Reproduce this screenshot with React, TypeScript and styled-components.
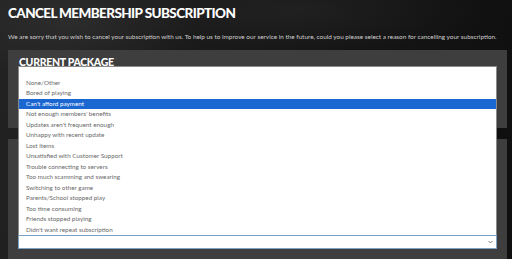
import styled, {createGlobalStyle} from "styled-components";

const reasons = [
    "",
    "None/Other",
    "Bored of playing",
    "Can't afford payment",
    "Not enough members' benefits",
    "Updates aren't frequent enough",
    "Unhappy with recent update",
    "Lost items",
    "Unsatisfied with Customer Support",
    "Trouble connecting to servers",
    "Too much scamming and swearing",
    "Switching to other game",
    "Parents/School stopped play",
    "Too time consuming",
    "Friends stopped playing",
    "Didn't want repeat subscription",
]

const GlobalStyle = createGlobalStyle`
    html, body {
        margin: 0;
        padding: 0;
    }
    body {
        background: #121212;
        font-family: Lato, "Open Sans", sans-serif;
        overflow: hidden;
    }
`

export default function App() {
    return (
        <>
            <GlobalStyle/>
            <Page>
                <Title>CANCEL MEMBERSHIP SUBSCRIPTION</Title>
                <Intro>
                    We are sorry that you wish to cancel your subscription with us. To help us to improve our service
                    in the future, could you please select a reason for cancelling your subscription.
                </Intro>

                <Panel>
                    <PanelHeading>CURRENT PACKAGE</PanelHeading>
                </Panel>

                <Panel $grow>
                    <SelectWrap>
                        <OptionList>
                            {reasons.map((r, i) => (
                                <Option key={i} $selected={i === 3}>{r}</Option>
                            ))}
                        </OptionList>
                        <SelectBox>
                            <Chevron viewBox="0 0 8 6">
                                <path d="M1 1.5 L4 4.5 L7 1.5" fill="none" stroke="#666" strokeWidth="1.4"/>
                            </Chevron>
                        </SelectBox>
                    </SelectWrap>
                </Panel>
            </Page>
        </>
    )
}

const Page = styled.div`
    height: 259px;
    box-sizing: border-box;
    padding: 0 5px 0 8px;
    display: flex;
    flex-direction: column;
    background:
        radial-gradient(ellipse 180px 90px at 70px 20px, rgba(70, 70, 70, 0.35), transparent 70%),
        radial-gradient(ellipse 260px 60px at 300px 10px, rgba(60, 60, 60, 0.25), transparent 70%),
        linear-gradient(100deg, #222 0%, #1a1a1a 35%, #141414 70%, #0f0f0f 100%);
`

const Title = styled.h1`
    margin: 0;
    padding-top: 4px;
    font-family: Lato, sans-serif;
    font-weight: 900;
    font-size: 13.5px;
    line-height: 18px;
    color: #fff;
    letter-spacing: -0.6px;
`

const Intro = styled.p`
    margin: 10px 0 0;
    font-size: 6.4px;
    line-height: 9px;
    color: #cfcfcf;
    white-space: nowrap;
`

const Panel = styled.section<{ $grow?: boolean }>`
    background: #3e3e3e;
    box-sizing: border-box;
    margin-top: ${p => p.$grow ? "11px" : "9px"};
    padding: 5px 10px 0 10px;
    height: ${p => p.$grow ? "auto" : "78px"};
    flex: ${p => p.$grow ? 1 : "none"};
    display: flex;
    flex-direction: column;
`

const PanelHeading = styled.h2`
    margin: 0;
    padding-left: 1px;
    font-family: Lato, sans-serif;
    font-weight: 900;
    font-size: 10.5px;
    line-height: 14px;
    letter-spacing: -0.3px;
    color: #fff;
`

const SelectWrap = styled.div`
    position: relative;
    margin-top: 91px;
`

const SelectBox = styled.div`
    height: 14px;
    box-sizing: border-box;
    background: #fff;
    border: 1px solid #7da2c8;
    display: flex;
    align-items: center;
    justify-content: flex-end;
    padding-right: 3px;
`

const Chevron = styled.svg`
    width: 5px;
    height: 4px;
`

const OptionList = styled.ul`
    position: absolute;
    left: 0;
    right: 0;
    bottom: 100%;
    margin: 0;
    padding: 0;
    list-style: none;
    background: #fff;
    border: 1px solid #8a8a8a;
    border-bottom: none;
`

const Option = styled.li<{ $selected?: boolean }>`
    height: 10.5px;
    line-height: 10.5px;
    padding-left: 7px;
    font-size: 6.3px;
    color: ${p => p.$selected ? "#fff" : "#6a6a6a"};
    background: ${p => p.$selected ? "#1a67d2" : "transparent"};
    white-space: nowrap;
`
